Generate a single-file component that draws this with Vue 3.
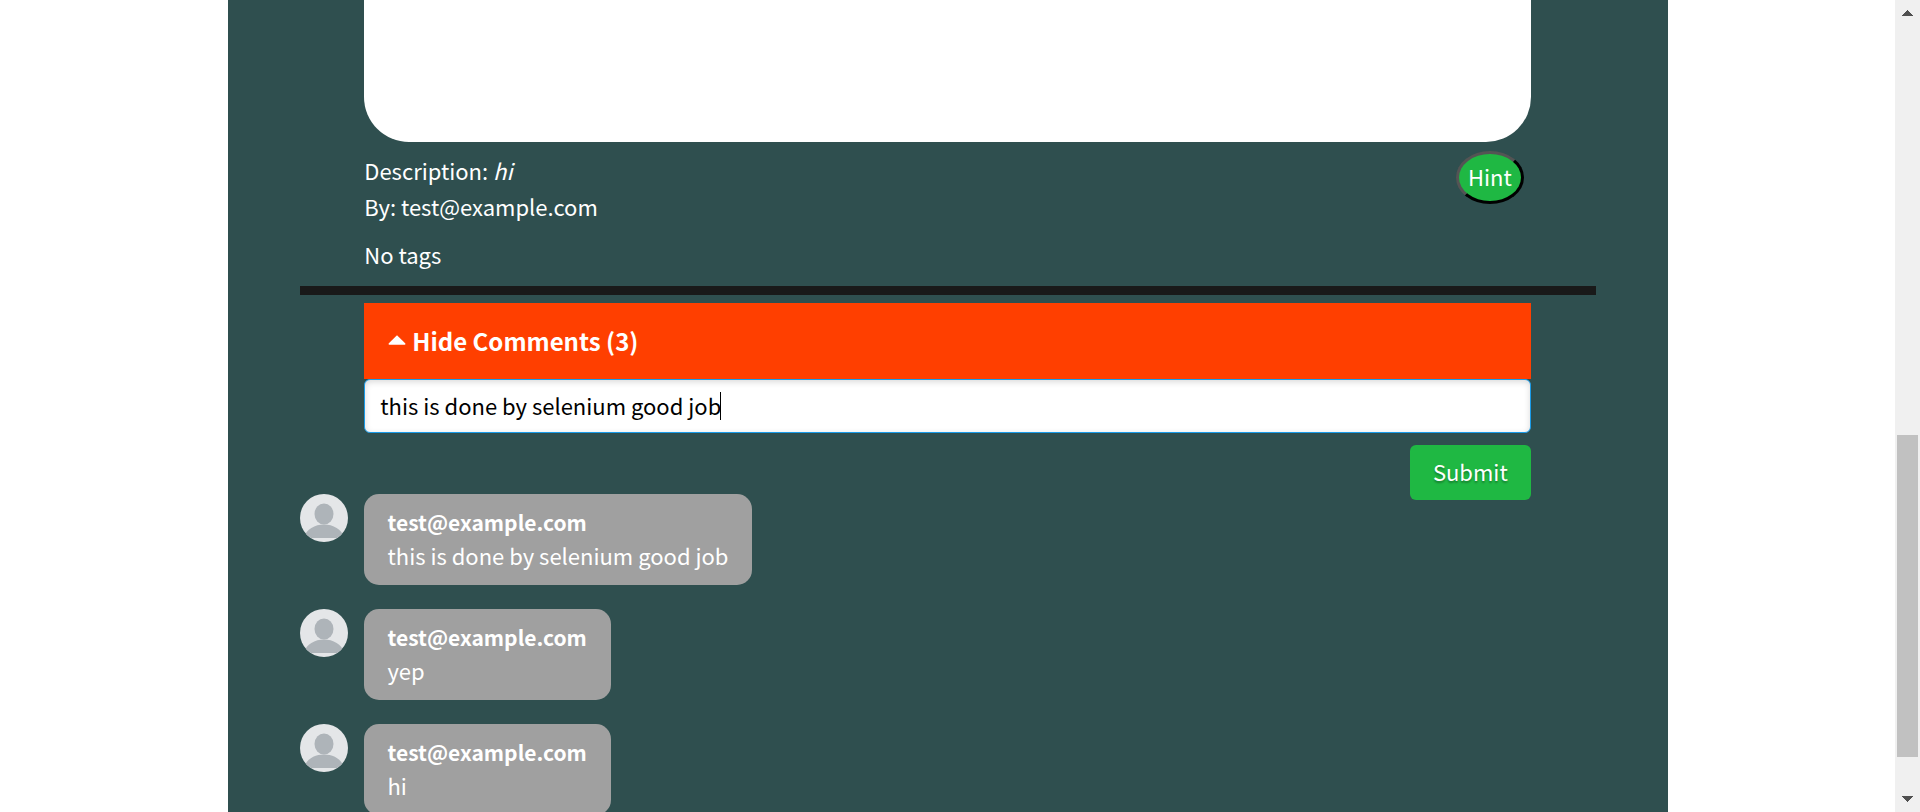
<script setup>
import { ref } from 'vue'

const draft = ref('this is done by selenium good job')
const comments = [
  { id: 1, author: 'test@example.com', text: 'this is done by selenium good job' },
  { id: 2, author: 'test@example.com', text: 'yep' },
  { id: 3, author: 'test@example.com', text: 'hi' },
]
</script>

<template>
  <div class="viewport">
    <main class="page">
      <div class="panel">
        <div class="post">
          <section class="content">
            <div class="picture"></div>
            <div class="meta">
              <div class="details">
                <p>Description: <em>hi</em></p>
                <p>By: test@example.com</p>
                <p class="tags">No tags</p>
              </div>
              <button type="button" class="hint">Hint</button>
            </div>
          </section>

          <hr class="divider" />

          <section class="content">
            <button type="button" class="toggle">
              <svg class="caret-up" viewBox="0 0 18 10" aria-hidden="true">
                <path d="M9 0.2 L17.4 8.6 Q17.6 9.8 16.6 9.8 H1.4 Q0.4 9.8 0.6 8.6 Z" fill="#fff" />
              </svg>
              Hide Comments (3)
            </button>
            <form class="form" @submit.prevent>
              <div class="field">
                <input v-model="draft" type="text" aria-label="Comment" />
                <span class="cursor"></span>
              </div>
              <button type="submit" class="submit">Submit</button>
            </form>
          </section>

          <ul class="comments">
            <li v-for="c in comments" :key="c.id" class="comment">
              <svg class="avatar" viewBox="0 0 48 48" aria-hidden="true">
                <defs>
                  <clipPath :id="'avatar-' + c.id"><circle cx="24" cy="24" r="24" /></clipPath>
                </defs>
                <g :clip-path="'url(#avatar-' + c.id + ')'">
                  <rect width="48" height="48" fill="#e4e6e8" />
                  <ellipse cx="24" cy="20" rx="9.5" ry="10.5" fill="#aeb4b9" />
                  <path d="M4 44 C6 35 15 30.5 24 30.5 S42 35 44 44 Z" fill="#aeb4b9" />
                </g>
              </svg>
              <div class="bubble">
                <strong>{{ c.author }}</strong>
                <span>{{ c.text }}</span>
              </div>
            </li>
          </ul>
        </div>
      </div>
    </main>

    <div class="scrollbar" aria-hidden="true">
      <svg class="arrow" viewBox="0 0 25 25" shape-rendering="crispEdges">
        <path d="M12.5 9.5 L18 16 H7 Z" fill="#505050" />
      </svg>
      <div class="track"><div class="thumb"></div></div>
      <svg class="arrow" viewBox="0 0 25 25" shape-rendering="crispEdges">
        <path d="M12.5 15.5 L18 9 H7 Z" fill="#505050" />
      </svg>
    </div>
  </div>
</template>

<style>
body {
  margin: 0;
  background: #fff;
}
</style>

<style scoped>
.viewport {
  display: flex;
  height: 100vh;
  overflow: hidden;
  color: #fff;
  font-family: "Noto Sans CJK SC", "Noto Sans", sans-serif;
  font-size: 22px;
}
button,
input {
  font: inherit;
  box-sizing: border-box;
}
.page {
  flex: 1;
  display: flex;
  justify-content: center;
}
.panel {
  width: 76%;
  max-width: 1440px;
  background: #2f4f4f;
}
.post {
  width: 90%;
  margin: 0 auto;
}
.content {
  width: 90%;
  margin: 0 auto;
}
.picture {
  height: 142px;
  background: #fff;
  border-radius: 0 0 45px 45px;
}
.meta {
  display: flex;
  justify-content: space-between;
  align-items: flex-start;
  padding: 9px 7px 0 0;
}
.details {
  padding: 1px 0 2px;
}
.details p {
  margin: 0;
  line-height: 36px;
}
.details .tags {
  margin: 12px 0;
}
.hint {
  height: 53px;
  padding: 0 9px 3px;
  border: 3px outset #000;
  border-radius: 50%;
  background: #1fb843;
  color: #fff;
  line-height: 36px;
}
.divider {
  height: 9px;
  margin: 0 0 8px;
  border: 0;
  background: #191919;
}
.toggle {
  display: flex;
  align-items: center;
  gap: 6px;
  width: 100%;
  height: 76px;
  padding: 0 24px 2px;
  border: 0;
  background: #ff3f00;
  color: #fff;
  font-size: 24px;
  font-weight: 700;
}
.caret-up {
  width: 18px;
  height: 10px;
}
.form {
  display: flex;
  flex-direction: column;
  align-items: flex-end;
  gap: 12px;
}
.field {
  position: relative;
  width: 100%;
}
.field input {
  display: block;
  width: 100%;
  height: 54px;
  padding: 0 15px 3px;
  border: 1px solid #1a9be8;
  border-radius: 6px;
  outline: none;
  background: #fff;
  box-shadow: inset 0 2px 6px rgba(0, 0, 0, 0.15);
  color: #000;
}
.cursor {
  position: absolute;
  top: 13px;
  left: 356px;
  width: 1px;
  height: 28px;
  background: #000;
}
.submit {
  height: 55px;
  padding: 0 23px 3px;
  border: 0;
  border-radius: 6px;
  background: #1fb843;
  color: #fff;
  text-shadow: 0 2px 2px rgba(0, 0, 0, 0.3);
}
.comments {
  display: flex;
  flex-direction: column;
  gap: 24px;
  margin: -6px 0 0;
  padding: 0;
  list-style: none;
}
.comment {
  display: flex;
  align-items: flex-start;
  gap: 16px;
}
.avatar {
  flex: none;
  width: 48px;
  height: 48px;
}
.bubble {
  display: flex;
  flex-direction: column;
  padding: 12px 24px 13px;
  border-radius: 15px;
  background: #a0a0a0;
  line-height: 33px;
}
.bubble strong {
  font-size: 21px;
}
.scrollbar {
  flex: none;
  display: flex;
  flex-direction: column;
  width: 25px;
  background: #f0f0f0;
}
.arrow {
  width: 25px;
  height: 25px;
}
.track {
  flex: 1;
  display: grid;
  grid-template-rows: 410fr 322fr 30fr;
  padding: 0 2px;
}
.thumb {
  grid-row: 2;
  background: #c1c1c1;
}
</style>
